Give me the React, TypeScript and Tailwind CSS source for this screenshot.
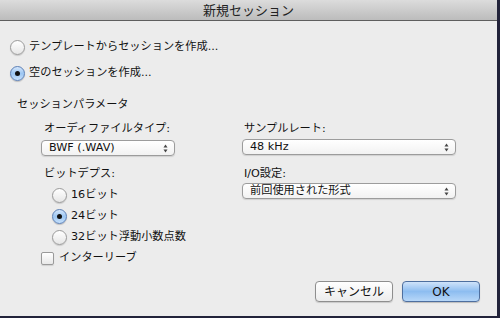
import React, { useState } from 'react';

const font = "font-['DejaVu_Sans','Noto_Sans_CJK_JP',sans-serif]";

const Radio: React.FC<{ checked: boolean; label: string; onClick: () => void }> = ({ checked, label, onClick }) => (
  <div className="flex items-center h-[16px] cursor-default" onClick={onClick}>
    <span
      className={`w-[15px] h-[15px] rounded-full border flex items-center justify-center shrink-0 ${
        checked
          ? 'border-[#5b7fb6] bg-gradient-to-b from-[#d4e6fb] via-[#9cc6f2] to-[#c6e0fb] shadow-[0_1px_1px_rgba(0,0,0,0.2)]'
          : 'border-[#9a9a9a] bg-gradient-to-b from-white to-[#e6e6e6] shadow-[0_1px_1px_rgba(0,0,0,0.15)]'
      }`}
    >
      {checked && <span className="w-[5px] h-[5px] rounded-full bg-[#111]" />}
    </span>
    <span className="ml-[4px] text-[11.2px] text-[#111] leading-none">{label}</span>
  </div>
);

const Select: React.FC<{ value: string; className?: string }> = ({ value, className }) => (
  <div
    className={`h-[16px] rounded-[4px] border border-[#9c9c9c] bg-gradient-to-b from-white to-[#f2f2f2] shadow-[0_1px_1px_rgba(0,0,0,0.12)] flex items-center justify-between pl-[7px] pr-[6px] ${className ?? ''}`}
  >
    <span className="text-[11.2px] text-[#111] leading-none">{value}</span>
    <svg width="5" height="9" viewBox="0 0 5 9" className="shrink-0">
      <path d="M2.5 0.5 L4.5 3.5 L0.5 3.5 Z" fill="#444" />
      <path d="M2.5 8.5 L4.5 5.5 L0.5 5.5 Z" fill="#444" />
    </svg>
  </div>
);

const App: React.FC = () => {
  const [mode, setMode] = useState<'template' | 'empty'>('empty');
  const [depth, setDepth] = useState<16 | 24 | 32>(24);
  const [interleave, setInterleave] = useState(false);

  return (
    <div className={`w-[500px] h-[318px] bg-[#22233a] ${font}`}>
      <div className="w-[497px] h-[316px] bg-[#ececec] flex flex-col">
        {/* タイトルバー */}
        <div className="h-[21px] shrink-0 bg-gradient-to-b from-[#dcdcdc] to-[#bcbcbc] border-b border-[#5e5e5e] flex items-center justify-center">
          <span className="text-[13px] text-[#222] leading-none">新規セッション</span>
        </div>

        <div className="flex flex-col pl-[10px] pt-[18px] flex-1">
          <Radio checked={mode === 'template'} label="テンプレートからセッションを作成..." onClick={() => setMode('template')} />
          <div className="mt-[10px]">
            <Radio checked={mode === 'empty'} label="空のセッションを作成..." onClick={() => setMode('empty')} />
          </div>

          <div className="mt-[17px] pl-[7px] text-[11.2px] text-[#111] leading-[14px]">セッションパラメータ</div>

          <div className="flex mt-[10px]">
            {/* 左カラム */}
            <div className="w-[232px] pl-[31px] flex flex-col">
              <div className="pl-[3px] text-[11.2px] text-[#111] leading-[14px]">オーディファイルタイプ:</div>
              <Select value="BWF (.WAV)" className="mt-[4px] w-[134px]" />
              <div className="mt-[11px] pl-[3px] text-[11.2px] text-[#111] leading-[14px]">ビットデプス:</div>
              <div className="pl-[11px] mt-[6px] flex flex-col gap-[5px]">
                <Radio checked={depth === 16} label="16ビット" onClick={() => setDepth(16)} />
                <Radio checked={depth === 24} label="24ビット" onClick={() => setDepth(24)} />
                <Radio checked={depth === 32} label="32ビット浮動小数点数" onClick={() => setDepth(32)} />
              </div>
              <div className="mt-[5px] flex items-center h-[16px]" onClick={() => setInterleave(!interleave)}>
                <span className="w-[13px] h-[13px] rounded-[2px] border border-[#9a9a9a] bg-gradient-to-b from-white to-[#e8e8e8] shadow-[0_1px_1px_rgba(0,0,0,0.12)] flex items-center justify-center">
                  {interleave && <span className="text-[10px] leading-none">✓</span>}
                </span>
                <span className="ml-[5px] text-[11.2px] text-[#111] leading-none">インターリーブ</span>
              </div>
            </div>

            {/* 右カラム */}
            <div className="flex flex-col">
              <div className="pl-[2px] text-[11.2px] text-[#111] leading-[14px]">サンプルレート:</div>
              <Select value="48 kHz" className="mt-[3px] w-[214px]" />
              <div className="mt-[12px] pl-[2px] text-[11.2px] text-[#111] leading-[14px]">I/O設定:</div>
              <Select value="前回使用された形式" className="mt-[2px] w-[214px]" />
            </div>
          </div>

          <div className="mt-auto mb-[14px] pr-[17px] flex justify-end gap-[9px]">
            <button className="w-[78px] h-[21px] rounded-[4px] border border-[#8e8e8e] bg-gradient-to-b from-white to-[#ececec] shadow-[0_1px_1px_rgba(0,0,0,0.15)] text-[12px] text-[#111] leading-none">
              キャンセル
            </button>
            <button className="w-[78px] h-[21px] rounded-[4px] border border-[#4e6f9f] bg-gradient-to-b from-[#cfe3fa] via-[#8dbdf0] to-[#b7d7f8] shadow-[0_1px_1px_rgba(0,0,0,0.2)] text-[12px] text-[#111] leading-none">
              OK
            </button>
          </div>
        </div>
      </div>
    </div>
  );
};

export default App;
